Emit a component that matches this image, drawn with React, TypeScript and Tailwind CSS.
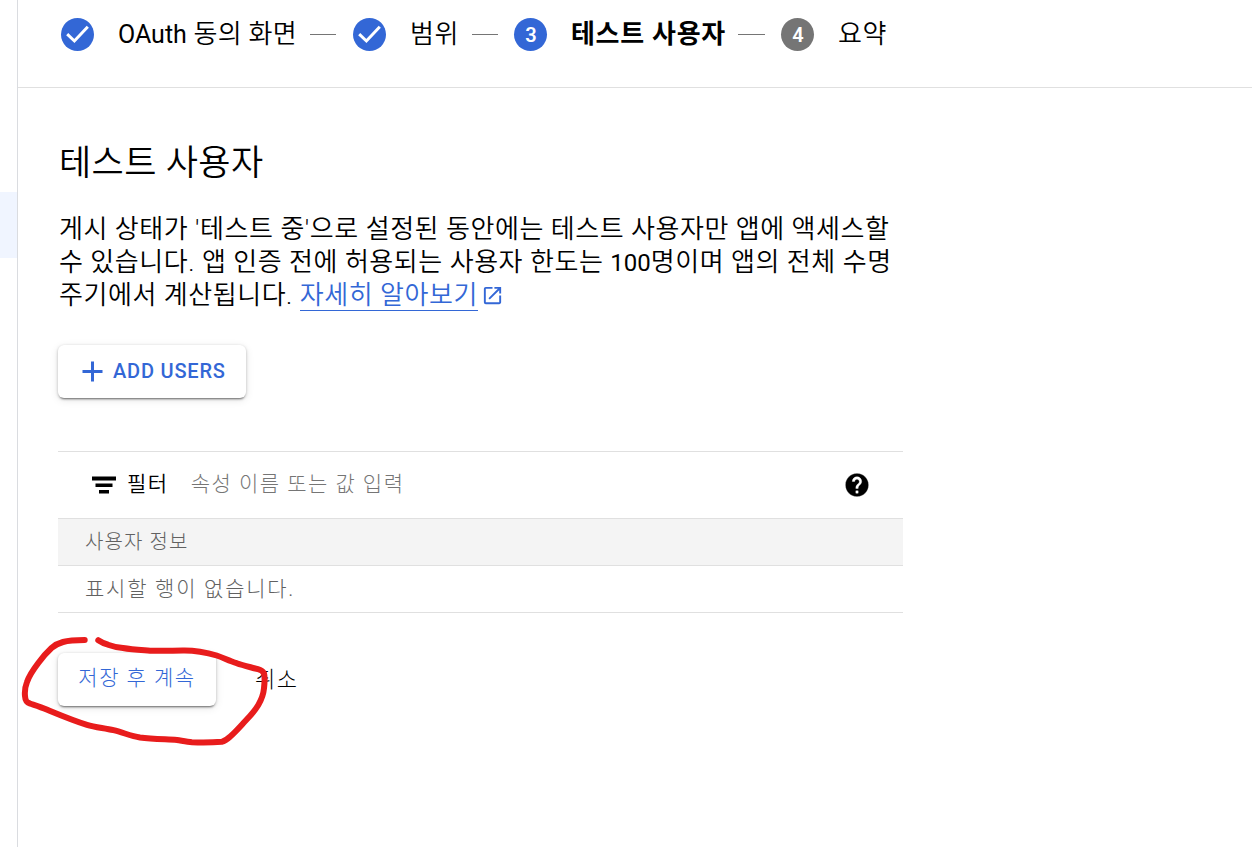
import type { ReactNode } from "react";

const CheckBadge = () => (
  <svg width="33" height="33" viewBox="0 0 33 33" className="shrink-0">
    <circle cx="16.5" cy="16.5" r="16.5" fill="#3367d6" />
    <path d="M6.2 16.2 L13.4 23 L26.8 8.8" fill="none" stroke="#fff" strokeWidth="3" />
  </svg>
);

const NumberBadge = ({ value, className }: { value: number; className: string }) => (
  <div className={`${className} flex h-[33px] w-[33px] shrink-0 items-center justify-center rounded-full text-xl font-semibold tracking-normal text-white`}>
    <span className="pt-px pl-px">{value}</span>
  </div>
);

const Step = ({ badge, label, className = "" }: { badge: ReactNode; label: ReactNode; className?: string }) => (
  <div className="flex shrink-0 items-center gap-6">
    {badge}
    <span className={`${className} whitespace-nowrap leading-[33px]`}>{label}</span>
  </div>
);

const StepLine = ({ className }: { className: string }) => (
  <div className={`${className} h-px shrink-0 bg-[#757575]`} />
);

const OpenInNew = () => (
  <svg width="23" height="23" viewBox="0 0 24 24" fill="#3367d6" className="mt-[5px] ml-[3px] inline-block align-top">
    <path d="M19 19H5V5h7V3H5a2 2 0 0 0-2 2v14a2 2 0 0 0 2 2h14c1.1 0 2-.9 2-2v-7h-2v7zM14 3v2h3.59l-9.83 9.83 1.41 1.41L19 6.41V10h2V3h-7z" />
  </svg>
);

const FilterIcon = () => (
  <svg width="24" height="18" viewBox="0 0 24 18" className="shrink-0">
    <path d="M0 0.5h24v4H0zM3.5 7.5h17v3.5h-17zM7 14h10v3.5H7z" fill="#000" />
  </svg>
);

const HelpIcon = () => (
  <svg width="28" height="28" viewBox="0 0 24 24" className="shrink-0">
    <path d="M12 2C6.48 2 2 6.48 2 12s4.48 10 10 10 10-4.48 10-10S17.52 2 12 2zm1 17h-2v-2h2v2zm2.07-7.75l-.9.92C13.45 12.9 13 13.5 13 15h-2v-.5c0-1.1.45-2.1 1.17-2.83l1.24-1.26c.37-.36.59-.86.59-1.41 0-1.1-.9-2-2-2s-2 .9-2 2H8c0-2.21 1.79-4 4-4s4 1.79 4 4c0 .88-.36 1.68-.93 2.25z" stroke="#fff" strokeWidth="0.3" />
  </svg>
);

const RaisedButton = ({ children, className }: { children: ReactNode; className: string }) => (
  <button
    className={`${className} flex h-[53px] items-center rounded-md bg-white pb-px whitespace-nowrap text-[#3367d6] shadow-[0_3px_2px_-2px_rgba(0,0,0,0.4),0_1px_3px_rgba(0,0,0,0.25),0_2px_8px_rgba(0,0,0,0.1)]`}
  >
    {children}
  </button>
);

// freehand marker loop around the save button
const MarkerLoop = () => (
  <svg width="300" height="140" viewBox="10 620 300 140" className="pointer-events-none absolute top-[620px] left-[10px]">
    <path
      d="M84.7 640 C75 640 69 640.3 63 642 C58 643.3 55 645 51.5 648 C46 653 42 658 38.3 663 C33 670 29 676 27 682 C25 687 24.6 692 25 696 C25.3 701 26.5 702.5 30 703.5 C36 705.5 41 707 46.7 709.5 C60 715 73 720.5 87 724.8 C96 727.5 105 728 113.5 730.2 C123 732.5 131 736 140 737.5 C152 739 165 739.2 177 740 C182 740.8 187 742 192 742.3 C202 742.6 212 742.6 221.7 741.8 C225 741 227.5 739 230 736.7 C236 731.5 241 725.5 246.7 719.5 C251.5 714.5 255 710.5 258.3 705 C261.5 699.5 263.5 694 264 688.3 C264.6 683 265 677 264 673.3 C262.5 670.5 261 670 258 669.2 C251 667.2 243.5 665.7 236.7 663.2 C229.5 661 223.5 657.8 216.7 655.5 C211 653.7 205.5 652.5 200 651.7 C194 650.8 189 650.4 183 650.5 C172 650.6 161 651.2 150 650.7 C141 650 132 649.6 123 648 C118 647.5 113 646.5 108 644.7 C104 643.5 101 642 98.3 640.2"
      fill="none"
      stroke="#e81c1c"
      strokeWidth="6"
      strokeLinecap="round"
      strokeLinejoin="round"
    />
  </svg>
);

export default function App() {
  return (
    <div className="relative flex h-[847px] w-[1252px] overflow-hidden bg-white font-[Roboto,'Noto_Sans_CJK_KR',sans-serif] text-black">
      <aside className="w-[18px] shrink-0 border-r border-[#dadce0] pt-48">
        <div className="h-[66px] bg-[#f0f5ff]" />
      </aside>

      <main className="flex-1">
        <header className="flex h-[88px] items-start border-b border-[#e0e0e0] pt-[18px] pl-[43px] text-[26px] font-[350] tracking-[0.7px]">
          <div className="flex items-center">
            <Step
              badge={<CheckBadge />}
              label={<><span className="text-[25px] leading-none font-normal tracking-normal">OAuth</span> 동의 화면</>}
              className="w-[192px] tracking-[0.3px]"
            />
            <StepLine className="mr-[17px] w-[26px]" />
            <Step badge={<CheckBadge />} label="범위" className="w-[62px]" />
            <StepLine className="mr-4 w-[26px]" />
            <Step badge={<NumberBadge value={3} className="bg-[#3367d6]" />} label="테스트 사용자" className="w-[167px] font-bold" />
            <StepLine className="mr-4 w-[27px]" />
            <Step badge={<NumberBadge value={4} className="bg-[#757575]" />} label="요약" />
          </div>
        </header>

        <section className="w-[885px] pt-14 pl-10">
          <h1 className="pl-px text-[35px] leading-10 font-[350] tracking-[0.4px] whitespace-nowrap">테스트 사용자</h1>

          <p className="mt-[29px] pl-px text-[26px] leading-[33px] font-[350] tracking-[0.55px] whitespace-nowrap">
            <span>게시 상태가 '테스트 중'으로 설정된 동안에는 테스트 사용자만 앱에 액세스할</span>
            <br />
            <span>
              수 있습니다. 앱 인증 전에 허용되는 사용자 한도는 <span className="text-[24px] leading-none font-normal tracking-normal">100</span>명이며 앱의 전체 수명
            </span>
            <br />
            <span>주기에서 계산됩니다. </span>
            <a className="inline-block h-8 border-b border-[#3367d6] align-top text-[#3367d6]">자세히 알아보기</a>
            <OpenInNew />
          </p>

          <RaisedButton className="mt-[33px] w-[188px] pl-6 text-xl font-medium tracking-[0.8px]">
            <svg width="21" height="21" viewBox="0 0 21 21" className="mr-2.5">
              <path d="M10.5 0.5v20M0.5 10.5h20" stroke="#3367d6" strokeWidth="3" />
            </svg>
            ADD USERS
          </RaisedButton>

          <div className="mt-[53px] border-y border-[#e0e0e0] text-[21px] font-light tracking-[1.5px] whitespace-nowrap">
            <div className="flex h-[66px] items-center pr-8 pl-[34px]">
              <FilterIcon />
              <span className="ml-[11px] font-[350]">필터</span>
              <span className="ml-[22px] flex-1 text-[#757575]">속성 이름 또는 값 입력</span>
              <HelpIcon />
            </div>
            <div className="flex h-12 items-center border-y border-[#e0e0e0] bg-[#f4f4f4] pl-[27px] text-xl tracking-[1.1px] text-[#616161]">사용자 정보</div>
            <div className="flex h-[46px] items-center pt-0.5 pl-[27px] tracking-[1.75px] text-[#616161]">표시할 행이 없습니다.</div>
          </div>

          <div className="mt-10 flex items-center text-[21px] font-light tracking-[1.5px]">
            <RaisedButton className="w-[158px] justify-center">저장 후 계속</RaisedButton>
            <button className="ml-[39px] pb-px text-[22px] whitespace-nowrap">취소</button>
          </div>
        </section>
      </main>

      <MarkerLoop />
    </div>
  );
}
